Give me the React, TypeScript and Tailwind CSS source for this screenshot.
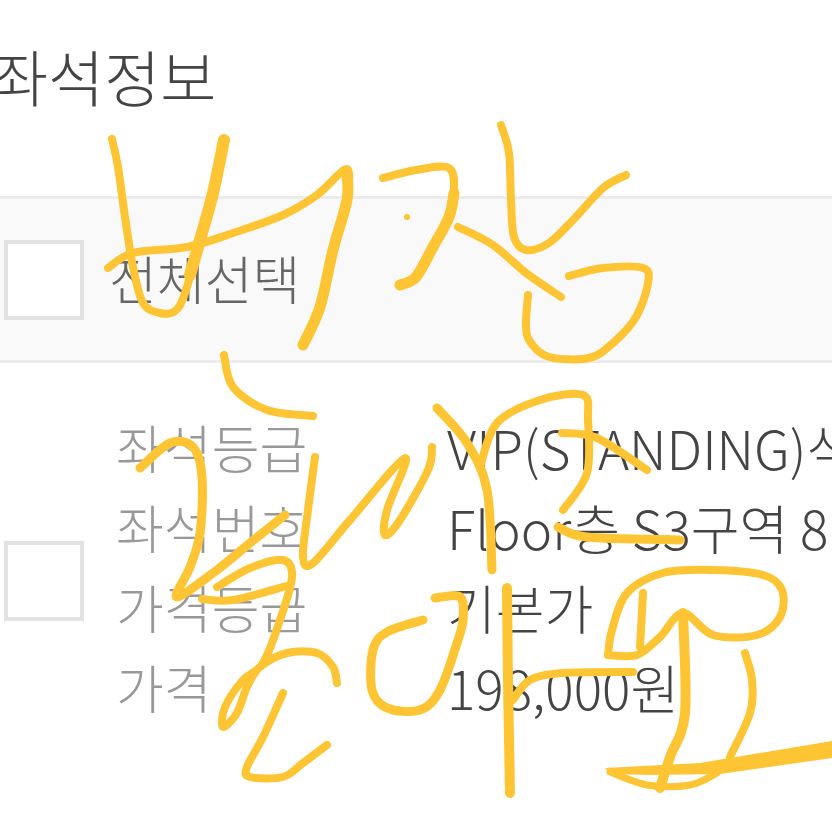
const smooth = (p: number[][]) => {
  let d = `M${p[0][0]} ${p[0][1]}`;
  for (let i = 0; i < p.length - 1; i++) {
    const a = p[Math.max(i - 1, 0)], b = p[i], c = p[i + 1], e = p[Math.min(i + 2, p.length - 1)];
    d += ` C${b[0] + (c[0] - a[0]) / 6} ${b[1] + (c[1] - a[1]) / 6} ${c[0] - (e[0] - b[0]) / 6} ${c[1] - (e[1] - b[1]) / 6} ${c[0]} ${c[1]}`;
  }
  return d;
};

const strokes: { w: number; p: number[][] }[] = [
  { w: 8, p: [[112,139],[118,167],[125,217],[133,267],[143,303],[160,313],[175,311],[185,293],[200,240]] },
  { w: 12, p: [[190,275],[200,240],[213,193],[224,140]] },
  { w: 8, p: [[108,268],[133,253],[187,247],[233,233],[283,215],[317,195],[347,169],[347,200]] },
  { w: 11, p: [[347,175],[347,200],[333,250],[320,307],[303,345]] },
  { w: 8, p: [[383,178],[416,170],[449,168],[454,193],[449,217]] },
  { w: 11, p: [[454,193],[449,217],[433,247],[416,277],[400,285]] },
  { w: 8, p: [[458,227],[493,245],[526,273],[561,297]] },
  { w: 8, p: [[501,125],[509,153],[511,200],[514,237],[526,250],[549,243],[573,220],[603,188],[626,175]] },
  { w: 8, p: [[569,276],[603,268],[643,268],[648,283],[636,317],[613,343],[589,358],[549,357],[531,343],[526,327],[528,295]] },
  { w: 8, p: [[224,355],[233,387],[267,410],[313,416]] },
  { w: 9, p: [[140,468],[170,443],[193,447],[202,477],[200,533],[190,567],[177,597],[217,570],[250,543],[285,515]] },
  { w: 8, p: [[315,457],[308,510],[303,557],[313,563],[350,520],[405,458],[387,510],[385,535],[400,520],[428,470],[432,447]] },
  { w: 8, p: [[217,587],[250,568],[283,560],[292,577],[280,620],[263,663],[243,680],[225,707],[223,727],[237,713],[247,687],[260,667],[287,653],[317,653],[333,667],[337,683]] },
  { w: 8, p: [[202,599],[233,600],[290,585]] },
  { w: 8, p: [[283,693],[263,737],[247,767],[250,777],[283,777],[303,763],[327,745]] },
  { w: 9, p: [[423,620],[387,632],[373,650],[372,690],[387,708],[420,710],[440,690],[457,643],[463,620],[460,597],[435,598]] },
  { w: 9, p: [[437,408],[467,443],[487,490],[492,570]] },
  { w: 8, p: [[480,467],[497,423],[540,400],[583,395],[588,420],[587,473],[563,510]] },
  { w: 8, p: [[562,433],[597,438],[647,470]] },
  { w: 9, p: [[558,527],[587,537],[680,540]] },
  { w: 10, p: [[507,588],[508,680],[510,793]] },
  { w: 8, p: [[513,700],[530,680],[563,673],[633,672]] },
  { w: 8, p: [[643,593],[640,647]] },
  { w: 8, p: [[608,655],[612,630],[627,593],[663,573],[713,570],[763,575],[782,590],[780,617],[757,635],[713,635],[683,613],[660,637],[637,655],[608,655]] },
  { w: 10, p: [[683,613],[685,713],[670,757],[660,788]] },
  { w: 8, p: [[745,653],[752,680],[750,713],[730,757]] },
  { w: 7, p: [[610,772],[647,785],[690,785],[717,773]] },
];

const rows = [
  ["좌석등급", "VIP(STANDING)석"],
  ["좌석번호", "Floor층 S3구역 8열"],
  ["가격등급", "기본가"],
  ["가격", "198,000원"],
];

const Box = () => <div className="w-[80px] h-[80px] shrink-0 border-[4px] border-[#e2e2e2] bg-white" />;

export default function App() {
  return (
    <div className="relative w-[832px] h-[832px] overflow-hidden bg-white text-[52px] font-light leading-[80px] whitespace-nowrap font-['Noto_Sans_CJK_KR','Noto_Sans',sans-serif]">
      <div className="h-[196px] pt-[36px] -ml-[8px] text-[61px] leading-[80px] text-[#444]">좌석정보</div>
      <div className="h-[167px] flex items-center gap-[25px] pl-[4px] bg-[#f9f9f9] border-y-[3px] border-[#ececec] text-[#666]">
        <Box />
        <span className="-mt-[4px]">전체선택</span>
      </div>
      <div className="flex items-start pl-[4px] pt-[44px]">
        <div className="mt-[134px]"><Box /></div>
        <div className="grid grid-cols-[331px_auto] pl-[32px] text-[#444]">
          {rows.map(([k, v]) => (
            <div key={k} className="contents">
              <span className="text-[#999]">{k}</span>
              <span className="text-[53px]">{v}</span>
            </div>
          ))}
        </div>
      </div>
      <svg className="absolute inset-0" width="832" height="832" viewBox="0 0 832 832" fill="none" stroke="#fdc533" strokeLinecap="round" strokeLinejoin="round">
        {strokes.map((s, i) => <path key={i} d={smooth(s.p)} strokeWidth={s.w} />)}
        <circle cx="407" cy="217" r="3" fill="#fdc533" stroke="none" />
        <path d="M605 768 L700 763 L832 741 L832 758 L720 774 L650 775 L612 774 Z" fill="#fdc533" stroke="none" />
      </svg>
    </div>
  );
}
